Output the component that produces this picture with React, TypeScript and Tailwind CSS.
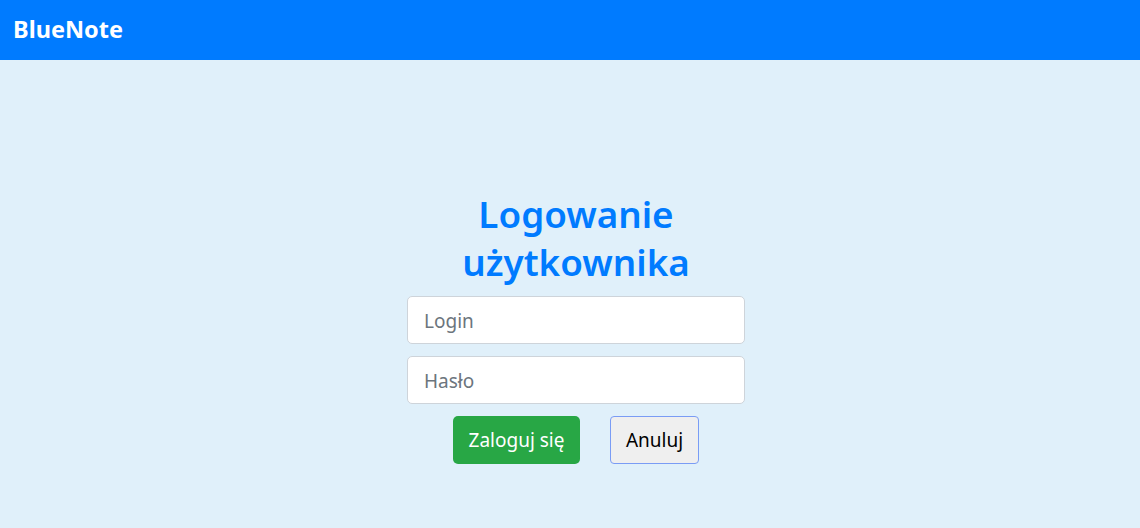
export default function App() {
  return (
    <div className="min-h-[528px] bg-[#e0f0fa]" style={{ fontFamily: '"Noto Sans", "Open Sans", sans-serif' }}>
      <nav className="h-[60px] bg-[#007bff] flex items-center px-[13px]">
        <span className="text-white font-bold text-[23.5px] leading-none">BlueNote</span>
      </nav>
      <div className="flex justify-center pl-[12px] pt-[130px]">
        <div className="w-[338px] flex flex-col items-center">
          <h1 className="text-[#007bff] text-[36.8px] leading-[48px] font-semibold text-center">
            Logowanie<br />użytkownika
          </h1>
          <input
            placeholder="Login"
            className="mt-[10px] w-full h-[48px] bg-white border border-[#ced4da] rounded-[5px] px-[16px] pt-[2px] text-[19px] placeholder:text-[#6c757d] outline-none"
          />
          <input
            placeholder="Hasło"
            type="password"
            className="mt-[12px] w-full h-[48px] bg-white border border-[#ced4da] rounded-[5px] px-[16px] pt-[2px] text-[19px] placeholder:text-[#6c757d] outline-none"
          />
          <div className="mt-[12px] flex gap-[30px]">
            <button className="h-[48px] w-[127px] bg-[#28a745] text-white rounded-[5px] text-[19px]">Zaloguj się</button>
            <button className="h-[48px] w-[89px] bg-[#efefef] text-black border border-[#7a9cf5] rounded-[4px] text-[19px]">Anuluj</button>
          </div>
        </div>
      </div>
    </div>
  );
}
